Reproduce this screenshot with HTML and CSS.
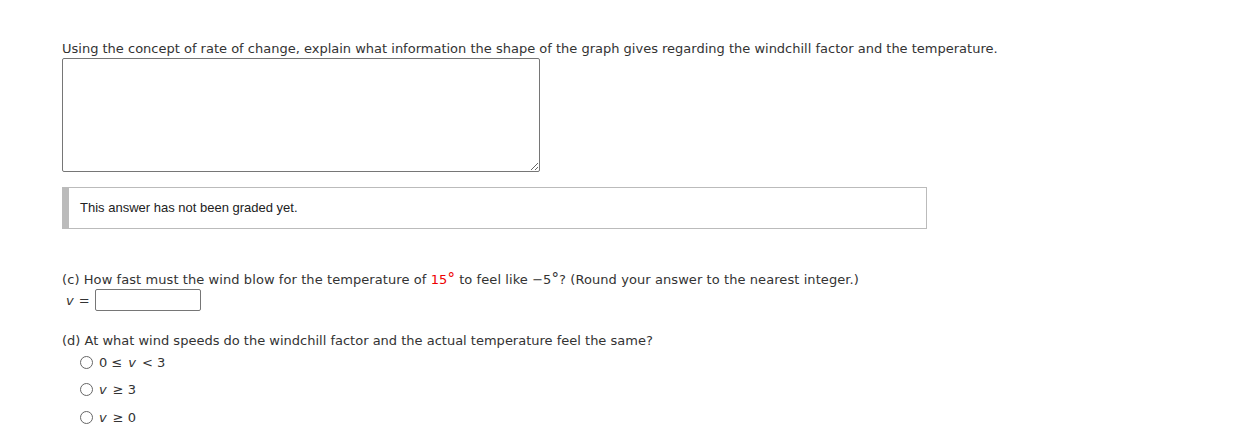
FILE: index.html
```html
<!DOCTYPE html>
<html>
<head>
<meta charset="utf-8">
<link rel="stylesheet" href="styles.css">
</head>
<body>
<div class="page">
  <p class="prompt">Using the concept of rate of change, explain what information the shape of the graph gives regarding the windchill factor and the temperature.</p>
  <textarea class="answer"></textarea>
  <div class="graded">This answer has not been graded yet.</div>

  <p class="q-c">(c) How fast must the wind blow for the temperature of <span class="red">15<span class="deg">°</span></span> to feel like −5<span class="deg">°</span>? (Round your answer to the nearest integer.)</p>
  <div class="v-row"><span class="var">v</span> = <input class="num" type="text"></div>

  <p class="q-d">(d) At what wind speeds do the windchill factor and the actual temperature feel the same?</p>
  <ul class="options">
    <li><span class="radio"></span>0 ≤ <span class="var">v</span> &lt; 3</li>
    <li><span class="radio"></span><span class="var">v</span> ≥ 3</li>
    <li><span class="radio"></span><span class="var">v</span> ≥ 0</li>
  </ul>
</div>
</body>
</html>
```
FILE: styles.css
```css
html, body {
  margin: 0;
  padding: 0;
  background: #fff;
}
.page {
  padding: 41px 0 0 62px;
  font-family: "DejaVu Sans", Verdana, sans-serif;
  font-size: 13px;
  color: #333;
}
p { margin: 0; }
.prompt {
  line-height: 16px;
}
.answer {
  display: block;
  box-sizing: border-box;
  width: 478px;
  height: 114px;
  margin-top: 1px;
  border: 1px solid #767676;
  border-radius: 2px;
  resize: vertical;
}
.graded {
  box-sizing: border-box;
  width: 865px;
  height: 42px;
  margin-top: 15px;
  border: 1px solid #bbb;
  border-left: 7px solid #bbb;
  padding: 0 0 2px 11px;
  display: flex;
  align-items: center;
  font-family: "Liberation Sans", Arial, sans-serif;
  font-size: 13px;
  color: #222;
}
.q-c {
  margin-top: 43px;
  line-height: 16px;
  letter-spacing: 0.08px;
}
.deg { font-size: 15px; line-height: 1; }
.red { color: #ee0000; }
.var { font-style: italic; }
.v-row {
  display: flex;
  align-items: center;
  gap: 5px;
  margin-top: 1px;
  padding-left: 4px;
  height: 22px;
}
.num {
  box-sizing: border-box;
  width: 106px;
  height: 22px;
  border: 1px solid #767676;
  border-radius: 2px;
  margin: 0;
}
.q-d {
  margin-top: 22px;
  line-height: 16px;
}
.options {
  list-style: none;
  margin: 3px 0 0 0;
  padding: 0 0 0 18px;
}
.options li {
  display: flex;
  align-items: center;
  gap: 6px;
  height: 28px;
}
.options li:first-child { height: 20px; }
.options li:nth-child(2) { margin-top: 3px; }
.radio {
  box-sizing: border-box;
  width: 13px;
  height: 13px;
  border: 1px solid #666;
  border-radius: 50%;
}
```
